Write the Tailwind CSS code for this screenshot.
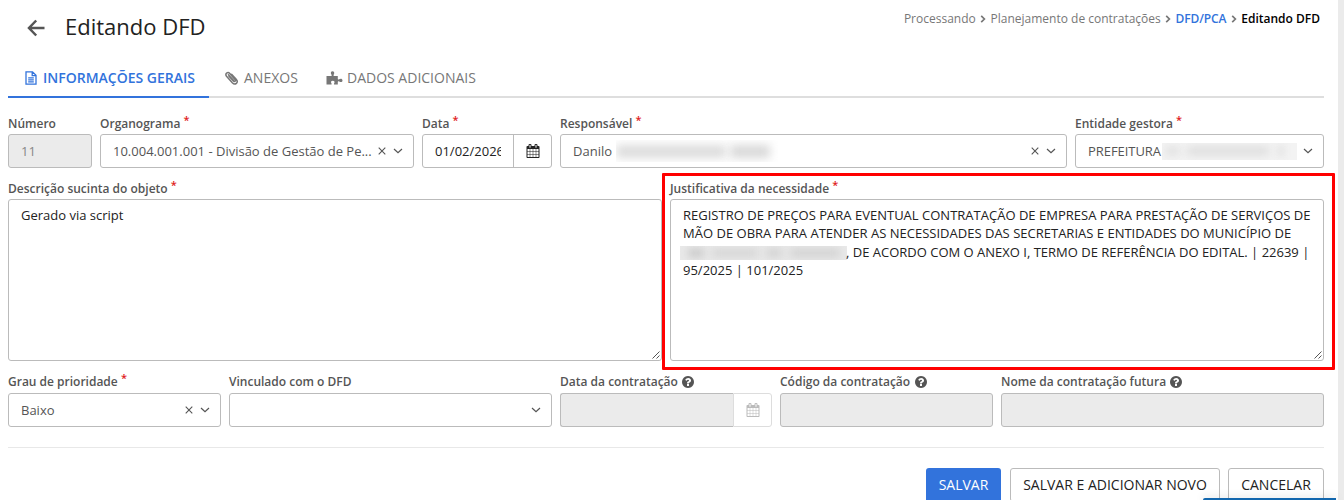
<!DOCTYPE html>
<html lang="pt-BR">
<head>
<meta charset="utf-8">
<title>Editando DFD</title>
<script src="https://cdn.jsdelivr.net/npm/@tailwindcss/browser@4"></script>
</head>
<body class="relative h-[500px] w-[1344px] overflow-hidden bg-white font-['Open_Sans',sans-serif] text-[13px] leading-[18.57px] text-[#555]">
<svg class="hidden">
  <symbol id="cal" viewBox="0 0 1792 1792"><path d="M192 1664h288v-288h-288v288zm352 0h320v-288h-320v288zm-352-352h288v-320h-288v320zm352 0h320v-320h-320v320zm-352-384h288v-288h-288v288zm736 736h320v-288h-320v288zm-384-736h320v-288h-320v288zm768 736h288v-288h-288v288zm-384-352h320v-320h-320v320zm-352-864v-288q0-13-9.500-22.500t-22.500-9.500h-64q-13 0-22.500 9.500t-9.500 22.500v288q0 13 9.500 22.500t22.500 9.500h64q13 0 22.500-9.500t9.500-22.500zm736 864h288v-320h-288v320zm-384-384h320v-288h-320v288zm384 0h288v-288h-288v288zm32-480v-288q0-13-9.500-22.500t-22.500-9.500h-64q-13 0-22.500 9.500t-9.500 22.500v288q0 13 9.500 22.500t22.500 9.500h64q13 0 22.500-9.500t9.500-22.500zm384-64v1280q0 52-38 90t-90 38h-1408q-52 0-90-38t-38-90v-1280q0-52 38-90t90-38h128v-96q0-66 47-113t113-47h64q66 0 113 47t47 113v96h384v-96q0-66 47-113t113-47h64q66 0 113 47t47 113v96h128q52 0 90 38t38 90z"/></symbol>
  <symbol id="help" viewBox="128 128 1536 1536"><path d="M1024 1376v-192q0-14-9-23t-23-9h-192q-14 0-23 9t-9 23v192q0 14 9 23t23 9h192q14 0 23-9t9-23zm256-672q0-88-55.500-163t-138.500-116-170-41q-243 0-371 213-15 24 8 42l132 100q7 6 19 6 16 0 25-12 53-68 86-92 34-24 86-24 48 0 85.500 26t37.500 59q0 38-20 61t-68 45q-63 28-115.500 86.500t-52.500 125.500v36q0 14 9 23t23 9h192q14 0 23-9t9-23q0-19 21.500-49.500t54.500-49.500q32-18 49-28.500t46-35 44.500-48 28-60.500 12.500-81zm384 192q0 209-103 385.500t-279.500 279.500-385.500 103-385.500-103-279.500-279.500-103-385.500 103-385.500 279.500-279.500 385.500-103 385.500 103 279.500 279.500 103 385.500z"/></symbol>
  <symbol id="x" viewBox="0 0 8 8"><path d="M.7.7l6.600 6.600M7.300.7L.7 7.300" fill="none" stroke="currentColor" stroke-width="1.100"/></symbol>
  <symbol id="down" viewBox="0 0 10 6"><path d="M1 1l4 3.700L9 1" fill="none" stroke="currentColor" stroke-width="1.200"/></symbol>
  <symbol id="sep" viewBox="0 0 6 8"><path d="M1.200.8L4.400 4 1.200 7.200" fill="none" stroke="currentColor" stroke-width="1.700"/></symbol>
  <symbol id="grip" viewBox="0 0 8 8"><path d="M.5 7.500l7-7M4.500 7.500l3-3" fill="none" stroke="currentColor" stroke-width="1"/></symbol>
</svg>

<div class="flex h-full">
<main class="w-[1338px] pl-2 pr-[14px]">
  <header class="flex h-[58px] justify-between">
    <div class="flex pl-[19px] pt-[10px]">
      <svg class="mt-[9px] h-[18px] w-[18px] text-[#555]" viewBox="0 0 18 18" fill="none" stroke="currentColor" stroke-width="2.500"><path d="M9.200 1.500L2 9l7.200 7.500M2 9h15.500"/></svg>
      <h1 class="ml-[20px] text-[22px] leading-8 text-[#222]">Editando DFD</h1>
    </div>
    <nav class="flex items-start gap-[4.400px] pr-[4px] pt-[10px] text-[12px] text-[#777]">
      <span>Processando</span><svg class="mt-[5px] h-2 w-1.5"><use href="#sep"/></svg>
      <span>Planejamento de contratações</span><svg class="mt-[5px] h-2 w-1.5"><use href="#sep"/></svg>
      <span class="font-semibold tracking-[-0.1px] text-[#3273dc]">DFD/PCA</span><svg class="mt-[5px] h-2 w-1.5"><use href="#sep"/></svg>
      <span class="font-semibold text-black">Editando DFD</span>
    </nav>
  </header>

  <div class="flex h-[40px] border-b-2 border-[#dedede] text-[14px] text-[#777]">
    <div class="flex h-[40px] w-[201px] items-center border-b-2 border-[#3273dc] pl-[17px] pt-[2px] font-semibold text-[#3273dc]">
      <svg class="h-[14px] w-[12px]" viewBox="0 0 12 14" fill="none" stroke="currentColor" stroke-width="1.300"><path d="M1 .9h6.500L11 4.300v8.800H1zM7.200 1v3.600H11M3.200 6.800h5.600M3.200 8.800h5.600M3.200 10.800h5.600"/></svg>
      <span class="ml-[6px]">INFORMAÇÕES GERAIS</span>
    </div>
    <div class="flex h-[40px] w-[102px] items-center pl-[16px]">
      <svg class="h-[14px] w-[13px]" viewBox="0 0 13 14" fill="none" stroke="currentColor" stroke-width="1.500" stroke-linecap="round"><path d="M4 5.300l4.400 4.800c1.200 1.300 2.700-.2 1.600-1.500L4.800 2.500C2.700.1-.5 2.800 1.500 5.200l5.800 6.500c2.900 3.100 6.600-.3 3.900-3.400L6.800 3.400M3.400 3.800l5.200 5.800"/></svg>
      <span class="ml-[6px]">ANEXOS</span>
    </div>
    <div class="flex h-[40px] items-center pl-[15px]">
      <svg class="h-[14px] w-[17px]" viewBox="0 0 17 14" fill="currentColor"><path d="M.5 5h4.700c.7 0 .7-.7.300-1.200C4.300 2 4.900.3 6.500.3s2.300 1.600 1.300 3.300c-.4.700-.4 1.400.3 1.400h3.700v2.700c0 .9.700 1.100 1.400.5 1.300-1 3.300-.7 3.300 1.200s-1.800 2.100-3.200 1.200c-.8-.5-1.500-.3-1.500.5v2.500H8.600c-.7 0-.9-.5-.5-1.100.9-1.300.4-2.700-1.300-2.700s-2.300 1.400-1.300 2.700c.4.600.2 1.100-.5 1.100H.5z"/></svg>
      <span class="ml-[4px]">DADOS ADICIONAIS</span>
    </div>
  </div>

  <section class="flex gap-2 pt-[16px]">
    <div class="w-[84px]">
      <label class="block h-5 pt-px text-[12px] font-semibold">Número</label>
      <div class="flex h-[34px] items-center rounded-[3px] border border-[#bbb] bg-[#ebebeb] px-3 text-[#888]">11</div>
    </div>
    <div class="w-[314px]">
      <label class="block h-5 pt-px text-[12px] font-semibold">Organograma <span class="relative -top-[4px] text-[11px] leading-none text-[#e02020]">*</span></label>
      <div class="flex h-[34px] items-center rounded-[3px] border border-[#bbb] pl-3 pr-[10px]"><span class="flex-1 whitespace-nowrap">10.004.001.001 - Divisão de Gestão de Pe...</span><svg class="mr-[7px] size-2"><use href="#x"/></svg><svg class="h-1.5 w-2.5"><use href="#down"/></svg></div>
    </div>
    <div class="w-[130px]">
      <label class="block h-5 pt-px text-[12px] font-semibold">Data <span class="relative -top-[4px] text-[11px] leading-none text-[#e02020]">*</span></label>
      <div class="flex h-[34px] items-center rounded-[3px] border border-[#bbb] pl-3 text-[#222]"><span class="w-[66px] overflow-hidden whitespace-nowrap">01/02/2026</span><span class="ml-[12px] flex h-full flex-1 items-center justify-center border-l border-[#bbb]"><svg class="size-[14px]" fill="currentColor"><use href="#cal"/></svg></span></div>
    </div>
    <div class="w-[507px]">
      <label class="block h-5 pt-px text-[12px] font-semibold">Responsável <span class="relative -top-[4px] text-[11px] leading-none text-[#e02020]">*</span></label>
      <div class="flex h-[34px] items-center rounded-[3px] border border-[#bbb] pl-3 pr-[10px]"><span>Danilo</span><span class="ml-1 flex h-[22px] w-[162px] items-center gap-1 overflow-hidden"><span class="h-[13px] w-[110px] bg-[#dcdcdc] blur-[5px]"></span><span class="h-[13px] w-[40px] bg-[#d8d8d8] blur-[5px]"></span></span><svg class="ml-auto mr-[7px] size-2"><use href="#x"/></svg><svg class="h-1.5 w-2.5"><use href="#down"/></svg></div>
    </div>
    <div class="w-[249px]">
      <label class="block h-5 pt-px text-[12px] font-semibold">Entidade gestora <span class="relative -top-[4px] text-[11px] leading-none text-[#e02020]">*</span></label>
      <div class="flex h-[34px] items-center rounded-[3px] border border-[#bbb] pl-3 pr-[10px]"><span class="tracking-[-0.05px]">PREFEITURA</span><span class="ml-[1px] flex h-[17px] w-[135px] items-center gap-2 overflow-hidden bg-[#f3f3f3] pl-1"><span class="h-2 w-[13px] bg-[#dedede] blur-[4px]"></span><span class="h-2 w-[82px] bg-[#dcdcdc] blur-[4px]"></span><span class="h-3 w-2 bg-[#e6e6e6] blur-[3px]"></span></span><svg class="ml-auto h-1.5 w-2.5"><use href="#down"/></svg></div>
    </div>
  </section>

  <section class="grid grid-cols-2 gap-2 pt-[11px]">
    <div>
      <label class="block h-5 pt-px text-[12px] font-semibold">Descrição sucinta do objeto <span class="relative -top-[4px] text-[11px] leading-none text-[#e02020]">*</span></label>
      <div class="relative h-[162px] rounded-[3px] border border-[#bbb] px-3 pt-[6px] text-[#222]">Gerado via script<svg class="absolute bottom-px right-px size-2 text-[#555]"><use href="#grip"/></svg></div>
    </div>
    <div>
      <label class="block h-5 pt-px text-[12px] font-semibold">Justificativa da necessidade <span class="relative -top-[4px] text-[11px] leading-none text-[#e02020]">*</span></label>
      <div class="relative h-[162px] whitespace-nowrap rounded-[3px] border border-[#bbb] px-3 pt-[6px] leading-[18.45px] text-[#222]">
        <p class="tracking-[0.01px]">REGISTRO DE PREÇOS PARA EVENTUAL CONTRATAÇÃO DE EMPRESA PARA PRESTAÇÃO DE SERVIÇOS DE</p>
        <p class="tracking-[0.01px]">MÃO DE OBRA PARA ATENDER AS NECESSIDADES DAS SECRETARIAS E ENTIDADES DO MUNICÍPIO DE</p>
        <p class="flex"><span class="-ml-[3px] mt-[3px] flex h-[14px] w-[167px] items-center gap-2 overflow-hidden bg-[#e9e9e9] pl-2"><span class="h-2 w-4 bg-[#c6c6c6] blur-[4px]"></span><span class="h-2 w-[46px] bg-[#d4d4d4] blur-[4px]"></span><span class="h-2 w-4 bg-[#d0d0d0] blur-[4px]"></span><span class="h-2 w-[50px] bg-[#d0d0d0] blur-[4px]"></span></span><span class="-ml-[1px]">, DE ACORDO COM O ANEXO I, TERMO DE REFERÊNCIA DO EDITAL. | 22639 |</span></p>
        <p>95/2025 | 101/2025</p>
        <svg class="absolute bottom-px right-px size-2 text-[#555]"><use href="#grip"/></svg>
      </div>
    </div>
  </section>

  <section class="flex gap-2 pt-[12px]">
    <div class="w-[213px]">
      <label class="block h-5 text-[12px] font-semibold">Grau de prioridade <span class="relative -top-[4px] text-[11px] leading-none text-[#e02020]">*</span></label>
      <div class="flex h-[34px] items-center rounded-[3px] border border-[#bbb] pl-3 pr-[10px]"><span class="flex-1">Baixo</span><svg class="mr-[7px] size-2"><use href="#x"/></svg><svg class="h-1.5 w-2.5"><use href="#down"/></svg></div>
    </div>
    <div class="w-[323px]">
      <label class="block h-5 text-[12px] font-semibold">Vinculado com o DFD</label>
      <div class="flex h-[34px] items-center justify-end rounded-[3px] border border-[#bbb] pr-[10px]"><svg class="h-1.5 w-2.5"><use href="#down"/></svg></div>
    </div>
    <div class="w-[212px]">
      <label class="flex h-5 gap-[4px] text-[12px] font-semibold">Data da contratação<svg class="mt-[3px] size-3" fill="currentColor"><use href="#help"/></svg></label>
      <div class="flex h-[34px]"><div class="w-[173px] rounded-l-[3px] border border-r-0 border-[#bbb] bg-[#ebebeb]"></div><div class="flex flex-1 items-center justify-center rounded-r-[3px] border border-[#ddd] text-[#bbb]"><svg class="size-[14px]" fill="currentColor"><use href="#cal"/></svg></div></div>
    </div>
    <div class="w-[213px]">
      <label class="flex h-5 gap-[5px] text-[12px] font-semibold">Código da contratação<svg class="mt-[3px] size-3" fill="currentColor"><use href="#help"/></svg></label>
      <div class="h-[34px] rounded-[3px] border border-[#bbb] bg-[#ebebeb]"></div>
    </div>
    <div class="w-[323px]">
      <label class="flex h-5 gap-[4px] text-[12px] font-semibold">Nome da contratação futura<svg class="mt-[3px] size-3" fill="currentColor"><use href="#help"/></svg></label>
      <div class="h-[34px] rounded-[3px] border border-[#bbb] bg-[#ebebeb]"></div>
    </div>
  </section>

  <footer class="mt-[20px] flex justify-end border-t border-[#e8e8e8] pt-[20px] text-[14px] text-[#222]">
    <button class="h-[34px] w-[75px] rounded-[3px] bg-[#3273dc] text-white">SALVAR</button>
    <button class="ml-[9px] h-[34px] w-[210px] rounded-[3px] border border-[#bbb]">SALVAR E ADICIONAR NOVO</button>
    <button class="ml-2 h-[34px] w-[96px] rounded-[3px] border border-[#bbb]">CANCELAR</button>
  </footer>
</main>
<aside class="w-[6px] bg-[#ebebeb]"></aside>
</div>
<div class="absolute left-[662px] top-[173px] h-[197px] w-[673px] rounded-[1px] border-3 border-[#f00]"></div>
<div class="absolute left-[1203px] top-[498px] h-[2px] w-[133px] rounded-tl-sm bg-[#1267ae] shadow-[0_0_8px_rgba(0,0,0,0.25)]"></div>
</body>
</html>
